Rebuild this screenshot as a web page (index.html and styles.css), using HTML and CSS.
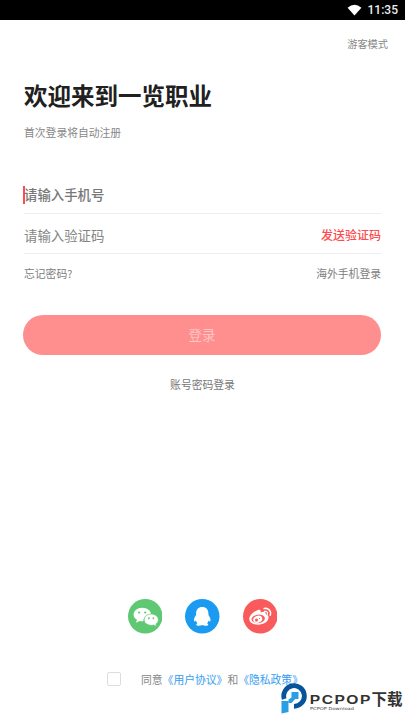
FILE: index.html
```html
<!DOCTYPE html>
<html lang="zh-CN">
<head>
<meta charset="utf-8">
<title>登录</title>
<link rel="stylesheet" href="styles.css">
</head>
<body>
<div class="screen">
  <header class="status">
    <svg class="wifi" viewBox="0 0 16 13"><path d="M.5 4Q8-2.6 15.5 4L8 12.5z" fill="#fff"/></svg>
    <span>11:35</span>
  </header>
  <nav class="guest">游客模式</nav>
  <main class="content">
    <h1>欢迎来到一览职业</h1>
    <p class="sub">首次登录将自动注册</p>
    <div class="field phone"><i class="caret"></i><span>请输入手机号</span></div>
    <div class="field code"><span>请输入验证码</span><b>发送验证码</b></div>
    <div class="links"><span>忘记密码?</span><span>海外手机登录</span></div>
    <button class="login">登录</button>
    <div class="account">账号密码登录</div>
  </main>
  <footer class="footer">
    <div class="social">
      <svg viewBox="0 0 34 34"><circle cx="17" cy="17" r="17" fill="#5fc873"/>
        <path d="M14 8.500c5 0 8.700 3 8.900 6.700-4.500.1-8 3-7.600 6.800-1.300.1-2.800 0-3.900-.4L8 23.300l.8-2.900C6.700 19.200 5.500 17.400 5.500 15.400c0-3.900 3.800-6.900 8.500-6.900z" fill="#fff"/>
        <path d="M22.700 14.800c4.200 0 7.200 2.600 7.200 5.700 0 1.800-.9 3.300-2.400 4.300l.6 2.200-2.900-1.300c-4.900 1.100-9.300-1.500-9.300-5.200 0-3.100 3-5.700 6.800-5.700z" fill="#fff" stroke="#5fc873" stroke-width=".7"/>
        <g fill="#5fc873"><circle cx="11" cy="13.300" r="1.100"/><circle cx="17" cy="13.300" r="1.100"/><circle cx="20.600" cy="19" r=".9"/><circle cx="25" cy="19" r=".9"/></g>
      </svg>
      <svg viewBox="0 0 34 34"><circle cx="17" cy="17" r="17" fill="#1a9bf1"/>
        <path d="M17 7.800c3.900 0 6 2.600 6 6 0 1 .1 1.800.5 2.600 1.200 1.700 1.900 3.500 1.600 5.100-.2 1-1 .9-1.800-.3-.3 1.200-.8 2-1.500 2.700 1.400.7 1.700 2.200-.3 2.400-1.600.2-3.300 0-4.500-.7-1.200.7-2.900.9-4.500.7-2-.2-1.700-1.700-.3-2.400-.7-.7-1.200-1.500-1.500-2.700-.8 1.200-1.600 1.300-1.800.3-.3-1.600.4-3.400 1.600-5.100.4-.8.5-1.600.5-2.600 0-3.400 2.100-6 6-6z" fill="#fff"/>
      </svg>
      <svg viewBox="0 0 34 34"><circle cx="17" cy="17" r="17" fill="#f95b5d"/>
        <path d="M14.300 11c1.900-.8 3.600 0 3.100 2.200 2.800-1.100 5.500-.8 4.900 1.800 2 .5 3.100 1.800 2.900 3.600-.4 3.900-5 6.700-10.200 6.700-4.900 0-8.800-2.300-8.800-5.700 0-3.400 4.700-7.300 8.100-8.600z" fill="#fff"/>
        <ellipse cx="15" cy="19.600" rx="6.600" ry="4.200" transform="rotate(-8 15 19.600)" fill="#f95b5d"/>
        <ellipse cx="14.500" cy="20" rx="4.600" ry="3.400" transform="rotate(-20 14.500 20)" fill="#fff"/>
        <circle cx="13.300" cy="20.800" r="1.500" fill="#f95b5d"/><circle cx="16.200" cy="19.300" r=".6" fill="#f95b5d"/>
        <g fill="none" stroke="#fff" stroke-linecap="round"><path d="M20.800 9.400c4.200-.9 7.400 2.300 6 6.700" stroke-width="1.500"/><path d="M21.300 12.200c1.900-.4 3.300.9 2.700 2.900" stroke-width="1.200"/></g>
      </svg>
    </div>
    <div class="consent"><i class="check"></i><span>同意<a>《用户协议》</a>和<a>《隐私政策》</a></span></div>
  </footer>
  <div class="watermark">
    <svg viewBox="0 0 125 34">
      <path d="M4.200 16A10.300 10.300 0 1 1 14 23.300" fill="none" stroke="#07549a" stroke-width="4.800"/>
      <path d="M1.500 18H8.500V29L1.500 30.500z" fill="#299fe3"/>
      <path d="M11.500 9h7v7h-3.300l-3.700 4H8.500v-3.500l3-2z" fill="#299fe3"/>
      <text class="wm-name" x="29.800" y="20.500" textLength="62" lengthAdjust="spacingAndGlyphs">PCPOP</text>
      <text class="wm-cn" x="91.500" y="22.300" textLength="31">下载</text>
      <text class="wm-sub" x="30" y="27.200" textLength="44" lengthAdjust="spacingAndGlyphs">PCPOP Download</text>
    </svg>
  </div>
</div>
</body>
</html>
```
FILE: styles.css
```css
* { box-sizing: border-box; }
body { margin: 0; background: #fff; font-family: "Noto Sans CJK SC", sans-serif; color: #888; }
.screen { position: relative; width: 405px; height: 720px; overflow: hidden; display: flex; flex-direction: column; }
.status { height: 20px; background: #000; color: #eee; display: flex; align-items: center; justify-content: flex-end; gap: 6px; padding-right: 7px; font: 500 12px/20px Roboto, sans-serif; }
.wifi { width: 15px; height: 12px; }
.guest { height: 48px; padding-right: 17px; text-align: right; font-size: 10.2px; line-height: 48px; }
.content { padding: 0 24px; }
h1 { margin: 9px 0 0; font-size: 23.500px; line-height: 36px; font-weight: 700; color: #202020; white-space: nowrap; }
.sub { margin: 10px 0 0; font-size: 10.8px; line-height: 18px; }
.field { display: flex; align-items: center; justify-content: space-between; height: 40px; border-bottom: 1px solid #eee; font-size: 13.4px; color: #858585; }
.phone { position: relative; margin-top: 33px; padding-top: 1px; font-weight: 500; color: #777; }
.caret { position: absolute; left: -1px; top: 12px; width: 2px; height: 18px; background: #fa4e55; }
.field.code { padding-top: 2px; }
.code b { font-size: 12px; font-weight: 500; color: #ff4a50; }
.links { display: flex; justify-content: space-between; height: 38px; line-height: 38px; font-size: 10.8px; color: #808080; }
.login { display: block; width: 358px; height: 40px; margin-top: 23px; margin-left: -1px; padding: 0 0 1px; border: 0; border-radius: 20px; background: #ff8f8f; color: #ffc4c4; font: 13.4px/39px "Noto Sans CJK SC", sans-serif; }
.account { margin-top: 20px; text-align: center; font-size: 10.8px; line-height: 18px; color: #777; }
.footer { margin-top: auto; height: 121px; }
.social { display: flex; justify-content: center; gap: 23px; }
.social svg { width: 34.500px; height: 34.500px; }
.consent { display: flex; align-items: center; margin-top: 35px; padding-left: 107px; font-size: 10.8px; line-height: 20px; gap: 20px; white-space: nowrap; }
.check { width: 14px; height: 14px; border: 1px solid #ddd; border-radius: 2px; }
.consent a { color: #369df2; }
.watermark { position: absolute; left: 280px; top: 683px; width: 125px; height: 34px; }
.watermark svg { display: block; width: 125px; height: 34px; }
.wm-name { font: 700 12.500px "Liberation Sans", sans-serif; letter-spacing: 1.2px; fill: #333; }
.wm-cn { font: 700 15.500px "Noto Sans CJK SC", sans-serif; fill: #333; }
.wm-sub { font: 4px "DejaVu Sans", sans-serif; fill: #444; }
```
